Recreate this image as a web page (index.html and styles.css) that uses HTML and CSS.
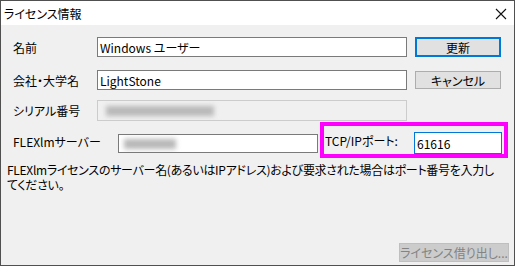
FILE: index.html
```html
<!DOCTYPE html>
<html lang="ja">

<head>
    <meta charset="UTF-8">
    <title>ライセンス情報</title>
    <link rel="stylesheet" href="styles.css">
</head>

<body>
    <div class="window">
        <div class="titlebar">
            <span class="title">ライセンス情報</span>
            <svg class="close" width="12" height="12" viewBox="0 0 12 12">
                <path d="M1 1 L11 11 M11 1 L1 11" stroke="#111" stroke-width="1.1" fill="none" />
            </svg>
        </div>
        <div class="content">
            <div class="row row-name">
                <label class="label">名前</label>
                <input class="field" type="text" value="Windows ユーザー">
                <button class="btn btn-default">更新</button>
            </div>
            <div class="row row-company">
                <label class="label">会社・大学名</label>
                <input class="field" type="text" value="LightStone">
                <button class="btn">キャンセル</button>
            </div>
            <div class="row row-serial">
                <label class="label">シリアル番号</label>
                <div class="field disabled">
                    <span class="blur blur-serial"></span>
                </div>
            </div>
            <div class="row row-server">
                <label class="label label-server">FLEXlmサーバー</label>
                <div class="field field-server">
                    <span class="blur blur-server"></span>
                </div>
                <div class="highlight">
                    <span class="port-label">TCP/IPポート:</span>
                    <input class="field field-port" type="text" value="61616">
                </div>
            </div>
            <p class="note">FLEXlmライセンスのサーバー名(あるいはIPアドレス)および要求された場合はポート番号を入力してください。</p>
            <div class="footer">
                <button class="btn btn-disabled" disabled>ライセンス借り出し...</button>
            </div>
        </div>
    </div>
</body>

</html>
```

FILE: styles.css
```css
* {
    box-sizing: border-box;
    margin: 0;
    padding: 0;
}

body {
    font-family: "Noto Sans CJK JP", "Noto Sans", sans-serif;
    font-size: 12px;
    font-feature-settings: "palt";
    color: #000;
    background: #fff;
}

.window {
    width: 515px;
    height: 266px;
    border: 1px solid #505050;
    background: #f0f0f0;
    display: flex;
    flex-direction: column;
}

.titlebar {
    height: 24px;
    background: #fff;
    display: flex;
    align-items: center;
    justify-content: space-between;
    padding: 0 7px 0 3px;
}

.title {
    font-size: 12px;
}

.close {
    margin-top: 2px;
}

.content {
    flex: 1;
    display: flex;
    flex-direction: column;
    padding: 12px 0 0 0;
}

.row {
    display: flex;
    align-items: center;
}

.label {
    width: 84px;
    margin-left: 12px;
    flex-shrink: 0;
}

.field {
    width: 310px;
    height: 20px;
    border: 1px solid #7a7a7a;
    background: #fff;
    font: inherit;
    padding: 0 2px;
    outline: none;
    position: relative;
    overflow: hidden;
}

.btn {
    width: 86px;
    height: 20px;
    margin-left: 8px;
    border: 1px solid #adadad;
    background: #e1e1e1;
    font: inherit;
    color: #000;
}

.btn-default {
    border: 2px solid #0078d7;
}

.row-company {
    margin-top: 13px;
}

.row-company .btn {
    height: 18px;
}

.row-serial {
    margin-top: 10px;
}

.disabled {
    border-color: #cccccc;
    background: #f0f0f0;
    height: 21px;
}

.blur {
    position: absolute;
    background: #b8b8b8;
    filter: blur(2.5px);
}

.blur-serial {
    left: 8px;
    top: 5px;
    width: 108px;
    height: 10px;
}

.blur-server {
    left: 5px;
    top: 4px;
    width: 52px;
    height: 10px;
}

.row-server {
    align-items: flex-start;
    margin-top: 1px;
}

.label-server {
    width: 105px;
    margin-top: 11px;
}

.field-server {
    width: 200px;
    height: 19px;
    margin-top: 12px;
}

.highlight {
    width: 188px;
    height: 36px;
    margin-left: 2px;
    border: 4px solid #ff00ff;
    display: flex;
    align-items: flex-end;
    padding-left: 1px;
}

.port-label {
    width: 89px;
    align-self: center;
    margin-top: 1px;
}

.field-port {
    width: 88px;
    height: 22px;
    border-color: #0078d7;
}

.note {
    margin: 4px 13px 0 6px;
    line-height: 15px;
    letter-spacing: -0.3px;
}

.footer {
    margin-top: auto;
    display: flex;
    justify-content: flex-end;
    padding: 0 5px 3px 0;
}

.btn-disabled {
    width: 110px;
    height: 19px;
    margin-left: 0;
    background: #cccccc;
    border-color: #bfbfbf;
    color: #838383;
}
```
